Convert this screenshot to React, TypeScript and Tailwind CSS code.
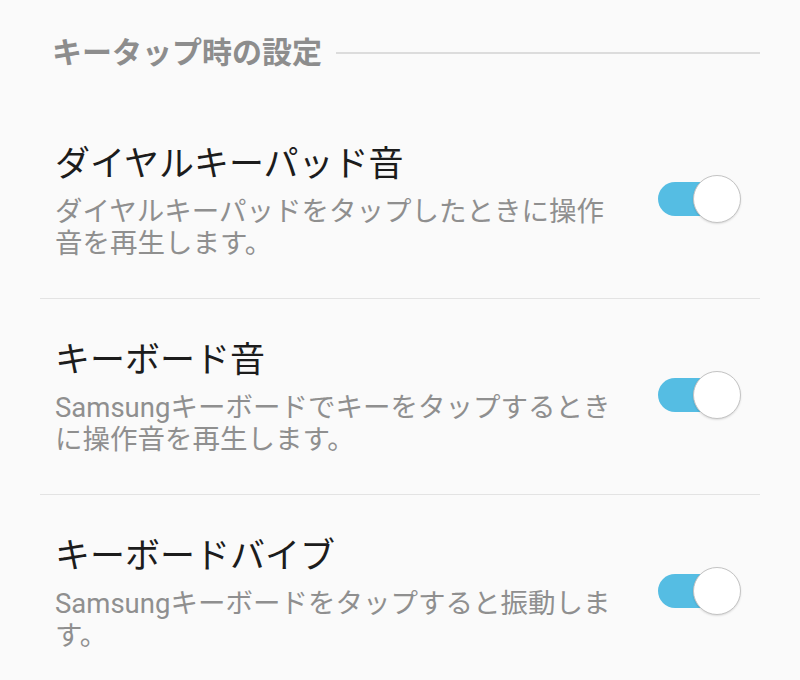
import React, { useState } from "react";

const items = [
  {
    title: "ダイヤルキーパッド音",
    desc: "ダイヤルキーパッドをタップしたときに操作音を再生します。",
  },
  {
    title: "キーボード音",
    desc: "Samsungキーボードでキーをタップするときに操作音を再生します。",
  },
  {
    title: "キーボードバイブ",
    desc: "Samsungキーボードをタップすると振動します。",
  },
];

const Toggle = ({ on, onClick }: { on: boolean; onClick: () => void }) => (
  <button
    onClick={onClick}
    aria-label="toggle"
    className="relative w-[83px] h-[48px] shrink-0"
  >
    <span
      className={`absolute left-0 top-[7px] w-[76px] h-[34px] rounded-full ${on ? "bg-[#55bde3]" : "bg-[#c9c9c9]"}`}
    />
    <span
      className={`absolute top-0 w-[48px] h-[48px] rounded-full bg-white border-[1.5px] border-[#c4c4c4] shadow-[0_1px_2px_rgba(0,0,0,0.12)] ${on ? "right-0" : "left-0"}`}
    />
  </button>
);

const App = () => {
  const [state, setState] = useState([true, true, true]);

  return (
    <div
      className="w-[800px] h-[680px] overflow-hidden bg-[#fafafa]"
      style={{ fontFamily: 'Roboto, "Noto Sans CJK JP", sans-serif' }}
    >
      <div className="flex items-center gap-[14px] pl-[52px] pr-[40px] pt-[33px]">
        <p className="text-[30px] leading-[40px] font-bold text-[#8d8d8d]">キータップ時の設定</p>
        <div className="flex-1 h-[2px] bg-[#dcdcdc]" />
      </div>

      <div className="mt-[72px] mx-[40px]">
        {items.map((it, i) => (
          <div key={i} className={`${i > 0 ? "border-t border-[#e3e3e3]" : ""}`}>
            <div className={`flex items-center justify-between pl-[15px] ${i > 0 ? "pt-[42px]" : "pt-0"} pb-[38px]`}>
              <div className="w-[560px]">
                <p className="text-[35px] leading-[40px] text-[#1c1c1c]">{it.title}</p>
                <p className="mt-[11px] text-[27.5px] leading-[32px] text-[#8f8f8f]">{it.desc}</p>
              </div>
              <div className="mr-[19px]">
                <Toggle
                  on={state[i]}
                  onClick={() => setState(state.map((s, j) => (j === i ? !s : s)))}
                />
              </div>
            </div>
          </div>
        ))}
      </div>
    </div>
  );
};

export default App;
